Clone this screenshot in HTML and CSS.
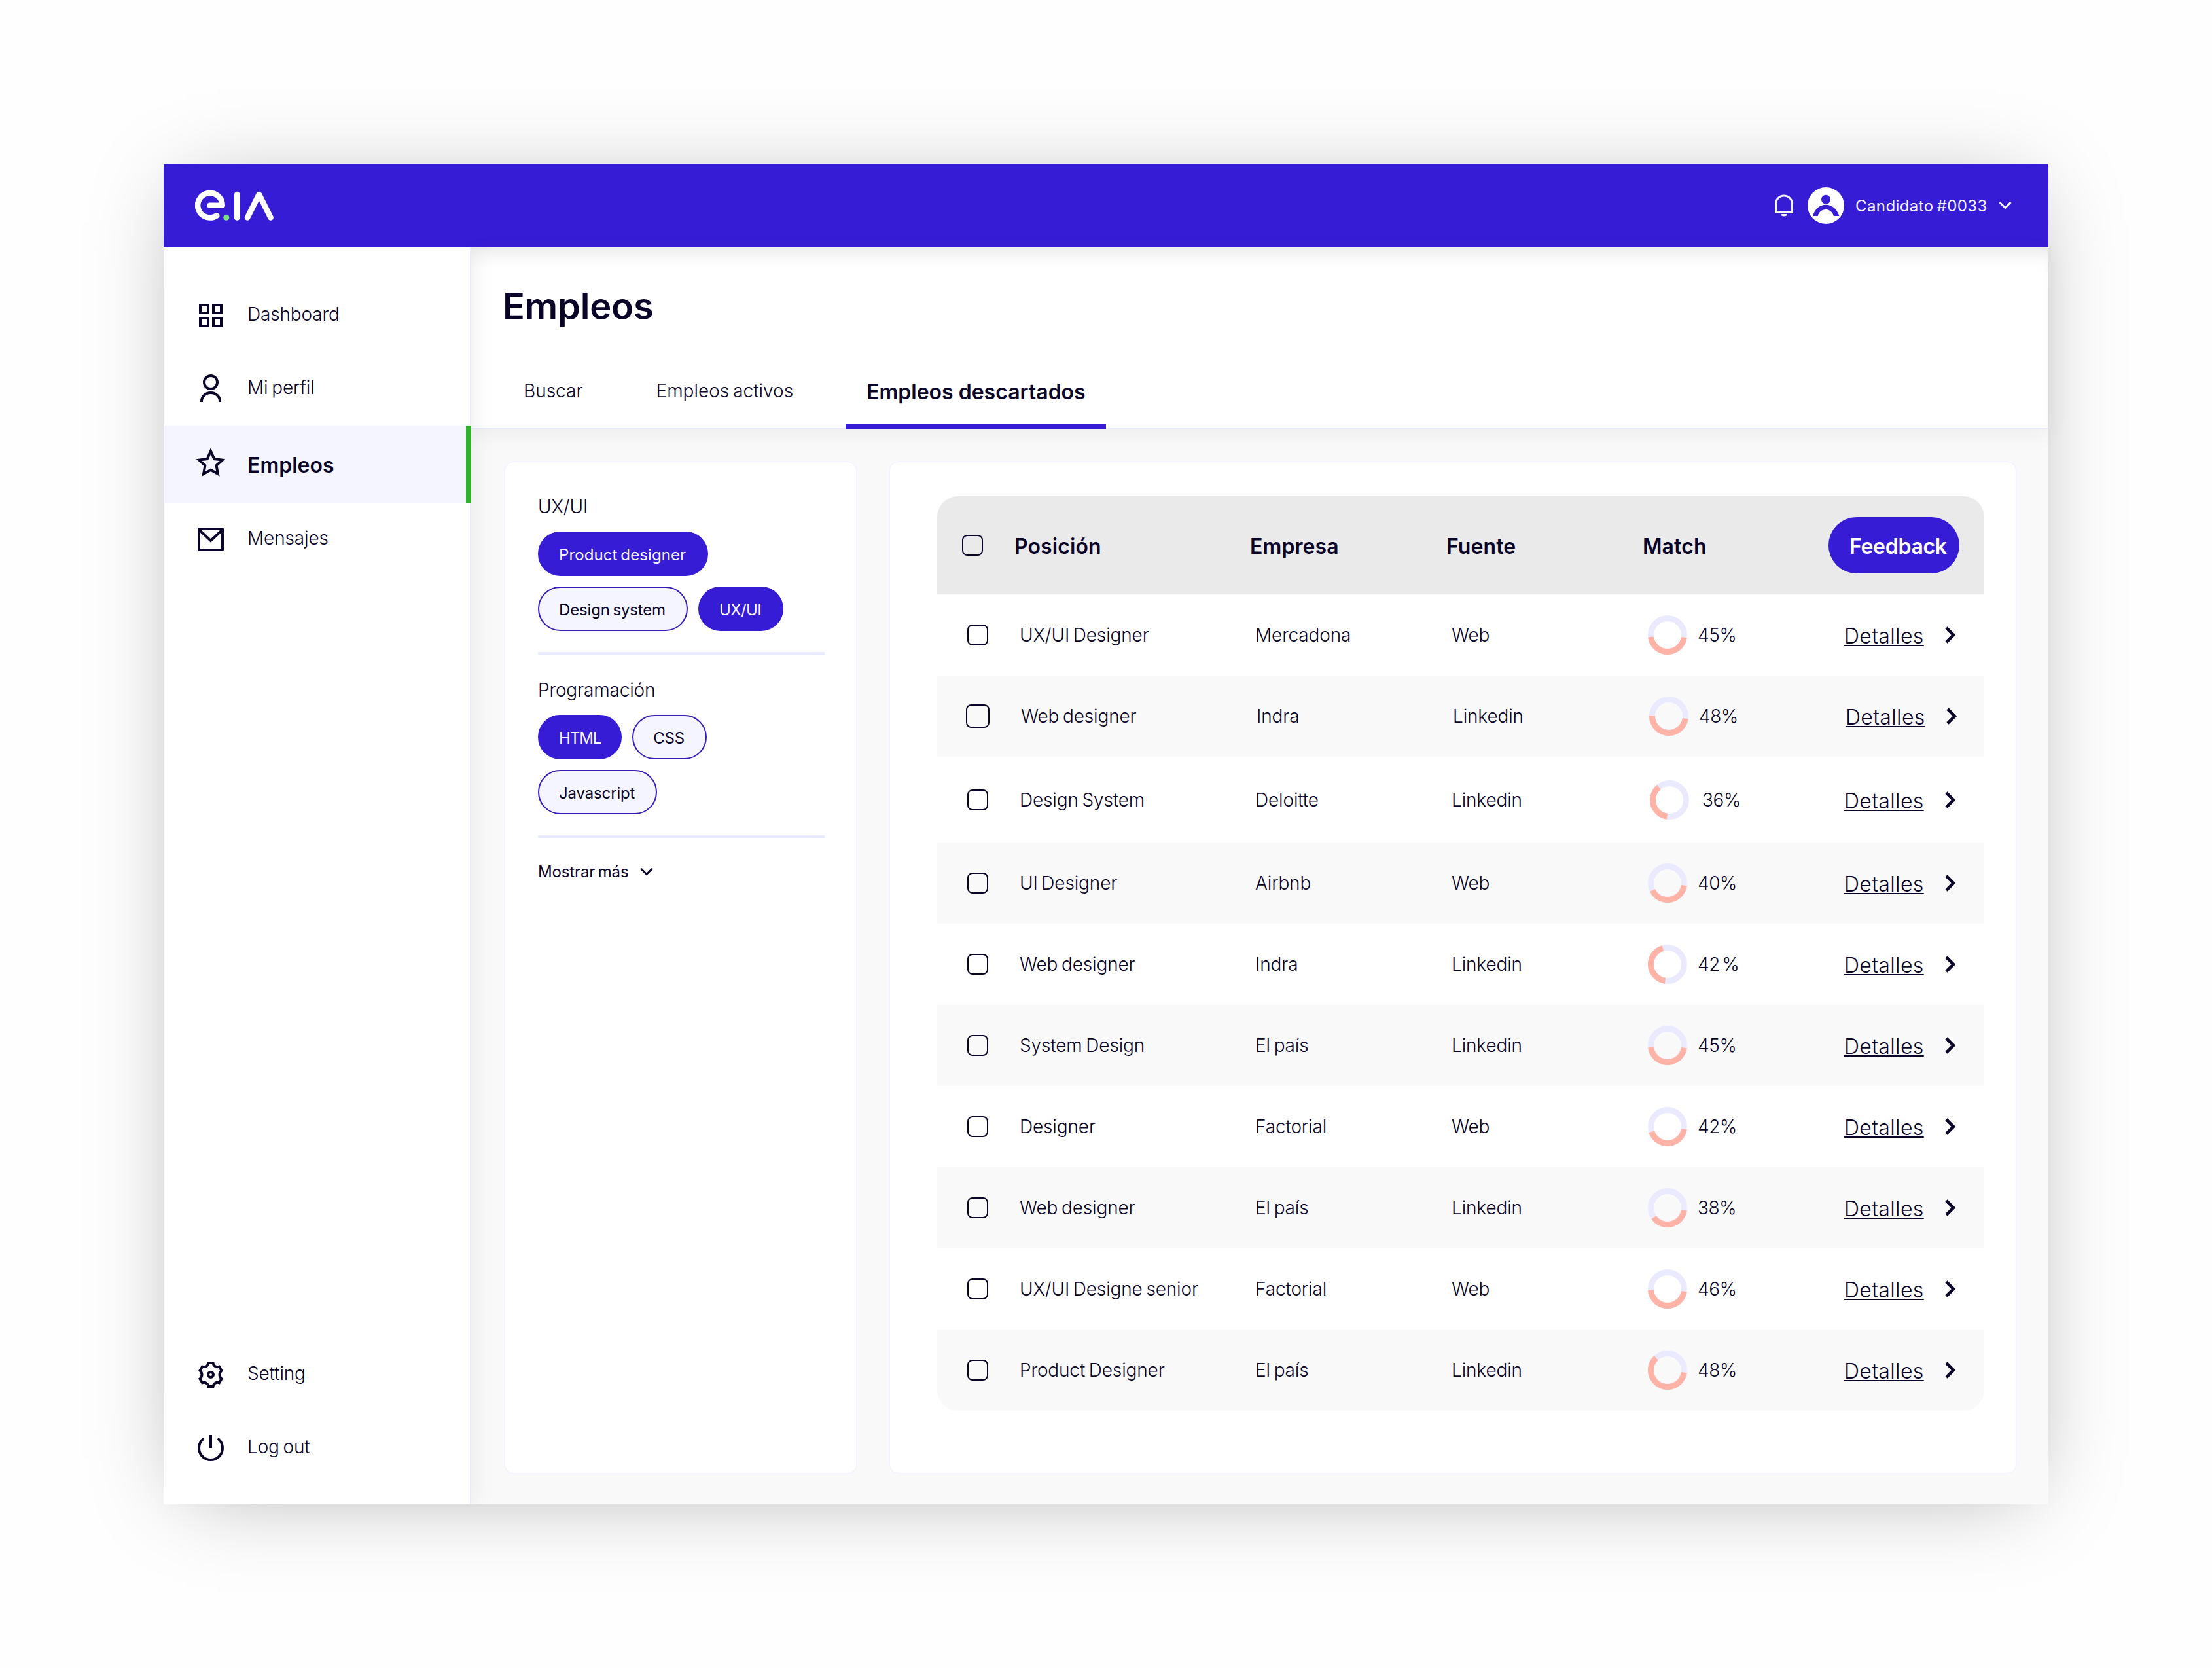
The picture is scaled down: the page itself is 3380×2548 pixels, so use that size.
FILE: index.html
```html
<!DOCTYPE html>
<html lang="es">
<head>
    <meta charset="UTF-8">
    <meta name="viewport" content="width=device-width, initial-scale=1.0">
    <title>e.IA - Empleos</title>
    <link rel="stylesheet" href="styles.css">
</head>
<body>
    <div class="app">
        <header class="topbar">
            <svg class="logo" viewBox="0 0 124 56" aria-label="e.IA">
                <g fill="none" stroke="#fff" stroke-width="8.6" stroke-linecap="round" stroke-linejoin="round">
                    <path d="M22.5 27.7H41.7A18.8 18.8 0 1 0 33.2 43.4"/>
                    <path d="M64.2 11V46.5"/>
                    <path d="M80 46.5L97.8 11L115.6 46.5"/>
                </g>
                <circle cx="47.8" cy="46.2" r="4.5" fill="#7ae082"/>
            </svg>
            <div class="user">
                <svg class="bell" viewBox="0 0 32 36">
                    <path d="M3.5 28.5V15.5a12.5 12.5 0 0 1 25 0v13z" fill="none" stroke="#f5f5ff" stroke-width="3"/>
                    <path d="M11.5 31h9a4.5 3.5 0 0 1-9 0z" fill="#f5f5ff"/>
                </svg>
                <svg class="avatar" viewBox="0 0 56 56">
                    <circle cx="28" cy="28" r="28" fill="#fff"/>
                    <circle cx="28" cy="18.7" r="7" fill="#371cd5"/>
                    <path d="M8 44C11 33 19 26.7 28 26.7S45 33 48.400 44H40C38.500 38 34 34 28 34S17 38 15.800 44z" fill="#371cd5"/>
                </svg>
                <span class="user-name">Candidato #0033</span>
                <svg class="arrow-down" viewBox="0 0 20 14"><path d="M1.500 2l8.500 8.500L18.500 2"/></svg>
            </div>
        </header>

        <div class="body">
            <aside class="sidebar">
                <nav class="menu">
                    <a class="menu-item">
                        <svg viewBox="0 0 48 48"><path d="M8 8h12v12H8zM28 8h12v12H28zM8 28h12v12H8zM28 28h12v12H28z"/></svg>
                        <span>Dashboard</span>
                    </a>
                    <a class="menu-item">
                        <svg viewBox="0 0 48 48"><circle cx="24" cy="14" r="10"/><path d="M10 44v-1a14 13 0 0 1 28 0v1"/></svg>
                        <span>Mi perfil</span>
                    </a>
                    <a class="menu-item active">
                        <svg viewBox="0 0 48 48"><path d="M24 7l5.300 12.100 12.500 1.500-9.200 8.500 2.300 12.800L24 35.800l-10.900 6.100 2.300-12.800-9.200-8.500 12.500-1.500z"/></svg>
                        <span>Empleos</span>
                    </a>
                    <a class="menu-item">
                        <svg viewBox="0 0 48 48"><path d="M6 8h36v32H6z" stroke-linejoin="round"/><path d="M6 9l18 17L42 9"/></svg>
                        <span>Mensajes</span>
                    </a>
                </nav>
                <nav class="menu">
                    <a class="menu-item">
                        <svg viewBox="0 0 48 48">
                            <path d="M20.500 6h7c.7 4.600 4.600 7.200 9.400 5.700l3.600 6.100c-4 3.300-4 9.100 0 12.400l-3.600 6.100c-4.800-1.500-8.700 1.100-9.400 5.700h-7c-.7-4.600-4.600-7.200-9.400-5.700l-3.600-6.100c4-3.300 4-9.100 0-12.400l3.600-6.100c4.800 1.500 8.700-1.100 9.400-5.700z"/>
                            <circle cx="24" cy="24" r="4"/>
                        </svg>
                        <span>Setting</span>
                    </a>
                    <a class="menu-item">
                        <svg viewBox="0 0 48 48"><path d="M13.300 9.500a18 18 0 1 0 21.400 0M24 4v20"/></svg>
                        <span>Log out</span>
                    </a>
                </nav>
            </aside>

            <main class="main">
                <section class="page-head">
                    <h1>Empleos</h1>
                    <div class="tabs">
                        <a class="tab">Buscar</a>
                        <a class="tab">Empleos activos</a>
                        <a class="tab active">Empleos descartados</a>
                    </div>
                </section>

                <div class="content">
                    <section class="filters">
                        <div class="filter">
                            <h2>UX/UI</h2>
                            <div class="chips">
                                <span class="chip on">Product designer</span>
                                <span class="chip">Design system</span>
                                <span class="chip on tight">UX/UI</span>
                            </div>
                        </div>
                        <div class="filter">
                            <h2>Programación</h2>
                            <div class="chips">
                                <span class="chip on tighter">HTML</span>
                                <span class="chip">CSS</span>
                                <span class="chip">Javascript</span>
                            </div>
                        </div>
                        <a class="more">Mostrar más <svg class="arrow-down" viewBox="0 0 20 14"><path d="M1.500 2l8.500 8.500L18.500 2"/></svg></a>
                    </section>

                    <section class="jobs">
                        <div class="table">
                            <div class="row head">
                                <i class="check"></i>
                                <span>Posición</span>
                                <span>Empresa</span>
                                <span>Fuente</span>
                                <span>Match</span>
                                <button class="feedback">Feedback</button>
                            </div>
                            <div class="row">
                                <i class="check"></i><span>UX/UI Designer</span><span>Mercadona</span><span>Web</span>
                                <div class="match"><svg viewBox="0 0 60 60"><circle cx="30" cy="30" r="25.500"/><circle class="value" cx="30" cy="30" r="25.500" pathLength="360" stroke-dasharray="165 360" transform="rotate(8 30 30)"/></svg>45%</div>
                                <a class="details"><span>Detalles</span><svg viewBox="0 0 20 28"><path d="M4 3l11 11L4 25"/></svg></a>
                            </div>
                            <div class="row big-check">
                                <i class="check"></i><span>Web designer</span><span>Indra</span><span>Linkedin</span>
                                <div class="match"><svg viewBox="0 0 60 60"><circle cx="30" cy="30" r="25.500"/><circle class="value" cx="30" cy="30" r="25.500" pathLength="360" stroke-dasharray="174 360" transform="rotate(8 30 30)"/></svg>48%</div>
                                <a class="details"><span>Detalles</span><svg viewBox="0 0 20 28"><path d="M4 3l11 11L4 25"/></svg></a>
                            </div>
                            <div class="row tall">
                                <i class="check"></i><span>Design System</span><span>Deloitte</span><span>Linkedin</span>
                                <div class="match"><svg viewBox="0 0 60 60"><circle cx="30" cy="30" r="25.500"/><circle class="value" cx="30" cy="30" r="25.500" pathLength="360" stroke-dasharray="133 360" transform="rotate(98 30 30)"/></svg>36%</div>
                                <a class="details"><span>Detalles</span><svg viewBox="0 0 20 28"><path d="M4 3l11 11L4 25"/></svg></a>
                            </div>
                            <div class="row">
                                <i class="check"></i><span>UI Designer</span><span>Airbnb</span><span>Web</span>
                                <div class="match"><svg viewBox="0 0 60 60"><circle cx="30" cy="30" r="25.500"/><circle class="value" cx="30" cy="30" r="25.500" pathLength="360" stroke-dasharray="146 360" transform="rotate(8 30 30)"/></svg>40%</div>
                                <a class="details"><span>Detalles</span><svg viewBox="0 0 20 28"><path d="M4 3l11 11L4 25"/></svg></a>
                            </div>
                            <div class="row">
                                <i class="check"></i><span>Web designer</span><span>Indra</span><span>Linkedin</span>
                                <div class="match"><svg viewBox="0 0 60 60"><circle cx="30" cy="30" r="25.500"/><circle class="value" cx="30" cy="30" r="25.500" pathLength="360" stroke-dasharray="156 360" transform="rotate(98 30 30)"/></svg>42 %</div>
                                <a class="details"><span>Detalles</span><svg viewBox="0 0 20 28"><path d="M4 3l11 11L4 25"/></svg></a>
                            </div>
                            <div class="row">
                                <i class="check"></i><span>System Design</span><span>El país</span><span>Linkedin</span>
                                <div class="match"><svg viewBox="0 0 60 60"><circle cx="30" cy="30" r="25.500"/><circle class="value" cx="30" cy="30" r="25.500" pathLength="360" stroke-dasharray="165 360" transform="rotate(8 30 30)"/></svg>45%</div>
                                <a class="details"><span>Detalles</span><svg viewBox="0 0 20 28"><path d="M4 3l11 11L4 25"/></svg></a>
                            </div>
                            <div class="row">
                                <i class="check"></i><span>Designer</span><span>Factorial</span><span>Web</span>
                                <div class="match"><svg viewBox="0 0 60 60"><circle cx="30" cy="30" r="25.500"/><circle class="value" cx="30" cy="30" r="25.500" pathLength="360" stroke-dasharray="154 360" transform="rotate(8 30 30)"/></svg>42%</div>
                                <a class="details"><span>Detalles</span><svg viewBox="0 0 20 28"><path d="M4 3l11 11L4 25"/></svg></a>
                            </div>
                            <div class="row">
                                <i class="check"></i><span>Web designer</span><span>El país</span><span>Linkedin</span>
                                <div class="match"><svg viewBox="0 0 60 60"><circle cx="30" cy="30" r="25.500"/><circle class="value" cx="30" cy="30" r="25.500" pathLength="360" stroke-dasharray="137 360" transform="rotate(8 30 30)"/></svg>38%</div>
                                <a class="details"><span>Detalles</span><svg viewBox="0 0 20 28"><path d="M4 3l11 11L4 25"/></svg></a>
                            </div>
                            <div class="row">
                                <i class="check"></i><span>UX/UI Designe senior</span><span>Factorial</span><span>Web</span>
                                <div class="match"><svg viewBox="0 0 60 60"><circle cx="30" cy="30" r="25.500"/><circle class="value" cx="30" cy="30" r="25.500" pathLength="360" stroke-dasharray="168 360" transform="rotate(8 30 30)"/></svg>46%</div>
                                <a class="details"><span>Detalles</span><svg viewBox="0 0 20 28"><path d="M4 3l11 11L4 25"/></svg></a>
                            </div>
                            <div class="row">
                                <i class="check"></i><span>Product Designer</span><span>El país</span><span>Linkedin</span>
                                <div class="match"><svg viewBox="0 0 60 60"><circle cx="30" cy="30" r="25.500"/><circle class="value" cx="30" cy="30" r="25.500" pathLength="360" stroke-dasharray="219 360" transform="rotate(8 30 30)"/></svg>48%</div>
                                <a class="details"><span>Detalles</span><svg viewBox="0 0 20 28"><path d="M4 3l11 11L4 25"/></svg></a>
                            </div>
                        </div>
                    </section>
                </div>
            </main>
        </div>
    </div>
</body>
</html>
```
FILE: styles.css
```css
* {
    margin: 0;
    padding: 0;
    box-sizing: border-box;
    font-family: 'Inter', 'Liberation Sans', sans-serif;
}

body {
    background: #fefefe;
    color: #0a0528;
    padding: 250px;
    font-size: 28px;
    font-weight: 300;
    letter-spacing: -0.15px;
    word-spacing: -2px;
}

.app {
    width: 2880px;
    height: 2048px;
    display: flex;
    flex-direction: column;
    background: #f9f9f9;
    box-shadow: 0 10px 130px -34px rgba(0, 0, 0, 0.34);
}

/* top bar */
.topbar {
    flex: none;
    height: 128px;
    padding: 0 56px 0 48px;
    display: flex;
    align-items: center;
    justify-content: space-between;
    background: #371cd5;
}

.logo {
    width: 124px;
    height: 56px;
}

.user {
    display: flex;
    align-items: center;
    color: #f5f5ff;
}

.bell {
    width: 32px;
    height: 36px;
    margin-right: 20px;
}

.avatar {
    width: 56px;
    height: 56px;
    margin-right: 17px;
}

.user-name {
    font-size: 24px;
    font-weight: 400;
    letter-spacing: 0.4px;
    line-height: 32px;
    margin-top: 2px;
    width: 219px;
    white-space: nowrap;
}

.arrow-down {
    width: 20px;
    height: 14px;
    fill: none;
    stroke: currentColor;
    stroke-width: 3;
}

/* layout */
.body {
    flex: 1;
    display: flex;
}

.sidebar {
    position: relative;
    z-index: 2;
    width: 470px;
    padding: 48px 0 30px;
    display: flex;
    flex-direction: column;
    justify-content: space-between;
    background: #fff;
    box-shadow: inset -2px 0 #eaeaff, 8px 0 32px rgba(0, 0, 0, 0.05);
    clip-path: inset(0 -60px 0 0);
}

.menu-item {
    height: 112px;
    padding-left: 48px;
    display: flex;
    align-items: center;
    gap: 32px;
}

.menu-item svg {
    width: 48px;
    height: 48px;
    fill: none;
    stroke: #0a0528;
    stroke-width: 4;
}

.menu-item span {
    margin-top: -4px;
}

.menu-item.active {
    height: 118px;
    background: #f5f5ff;
    border-right: 8px solid #33b12e;
    font-size: 32px;
    font-weight: 600;
    letter-spacing: 0;
}

.menu-item.active svg {
    margin-top: -6px;
}

.menu-item.active span {
    margin-top: 3px;
}

.main {
    flex: 1;
    display: flex;
    flex-direction: column;
}

.page-head {
    height: 278px;
    padding: 52px 48px 0;
    background: #fff;
    box-shadow: inset 0 -2px #eaeaff, inset 0 24px 32px -20px rgba(0, 0, 0, 0.12), 0 8px 32px rgba(0, 0, 0, 0.05);
}

h1 {
    font-size: 56px;
    font-weight: 600;
    line-height: 76px;
    letter-spacing: -0.2px;
}

.tabs {
    display: flex;
    gap: 48px;
    margin-top: 34px;
}

.tab {
    height: 116px;
    padding: 0 32px;
    line-height: 114px;
    letter-spacing: 0;
}

.tab.active {
    width: 398px;
    line-height: 117px;
    font-size: 32px;
    font-weight: 600;
    word-spacing: 0;
    white-space: nowrap;
    box-shadow: inset 0 -8px #371cd5;
}

.content {
    flex: 1;
    display: flex;
    gap: 48px;
    padding: 48px 48px 46px 50px;
}

.filters,
.jobs {
    background: #fff;
    border: 2px solid #f4f4ff;
    border-radius: 16px;
}

/* filters */
.filters {
    width: 540px;
    padding: 48px 48px 0 50px;
}

.filter {
    height: 246px;
    border-bottom: 4px solid #eaeaff;
    margin-bottom: 34px;
}

.filter h2 {
    font-size: 28px;
    font-weight: 300;
    line-height: 40px;
    margin-bottom: 18px;
}

.chips {
    display: flex;
    flex-wrap: wrap;
    gap: 16px;
}

.chip {
    height: 68px;
    padding: 0 32px 0 30px;
    border: 2px solid #371cb8;
    border-radius: 34px;
    background: #f5f5ff;
    font-size: 24px;
    font-weight: 400;
    line-height: 67px;
}

.chip.on {
    background: #371cd5;
    border-color: #371cd5;
    color: #f5f5ff;
    letter-spacing: 0.1px;
}

.chip.tight {
    letter-spacing: -0.6px;
}

.chip.tighter {
    padding-right: 30px;
    letter-spacing: -1.1px;
}

.more {
    display: flex;
    align-items: center;
    gap: 18px;
    font-size: 24px;
    font-weight: 400;
    line-height: 36px;
}

/* table */
.jobs {
    flex: 1;
    padding: 52px 48px 0 72px;
}

.table {
    border-radius: 32px;
    overflow: hidden;
}

.row {
    height: 124px;
    padding-left: 46px;
    display: grid;
    grid-template-columns: 80px 360px 300px 300px 300px 1fr;
    align-items: center;
    white-space: nowrap;
}

.row:nth-child(odd) {
    background: #f9f9f9;
}

.row.head {
    height: 150px;
    padding-left: 38px;
    background: #eaeaea;
    font-size: 32px;
    font-weight: 600;
    letter-spacing: 0.1px;
}

.row.head span {
    margin-top: 3px;
}

.row.tall {
    height: 131px;
}

.check {
    width: 32px;
    height: 32px;
    border: 2.5px solid #0a0528;
    border-radius: 8px;
}

.big-check {
    padding-left: 48px;
}

.big-check .check {
    width: 36px;
    height: 36px;
    margin-left: -4px;
}

.feedback {
    width: 200px;
    height: 86px;
    margin-left: -16px;
    padding: 2px 0 0 32px;
    border: none;
    border-radius: 43px;
    background: #371cd5;
    color: #fff;
    font-size: 32px;
    font-weight: 600;
    letter-spacing: -0.3px;
    text-align: left;
}

.match {
    display: flex;
    align-items: center;
    gap: 16px;
    letter-spacing: -0.4px;
    word-spacing: -4px;
}

.tall .match {
    padding-left: 3px;
    gap: 20px;
}

.match svg {
    width: 60px;
    height: 60px;
    fill: none;
    stroke: #eaeaff;
    stroke-width: 9;
}

.match .value {
    stroke: #ffb3a7;
}

.details {
    display: flex;
    align-items: center;
    gap: 31px;
    font-size: 32px;
    letter-spacing: 0.35px;
}

.details span {
    width: 121px;
    line-height: 36px;
    margin-top: 4px;
    text-decoration: underline;
    text-decoration-thickness: 2px;
    text-underline-offset: 2px;
    text-decoration-skip-ink: none;
}

.details svg {
    width: 20px;
    height: 28px;
    fill: none;
    stroke: #0a0528;
    stroke-width: 4.6;
}
```
